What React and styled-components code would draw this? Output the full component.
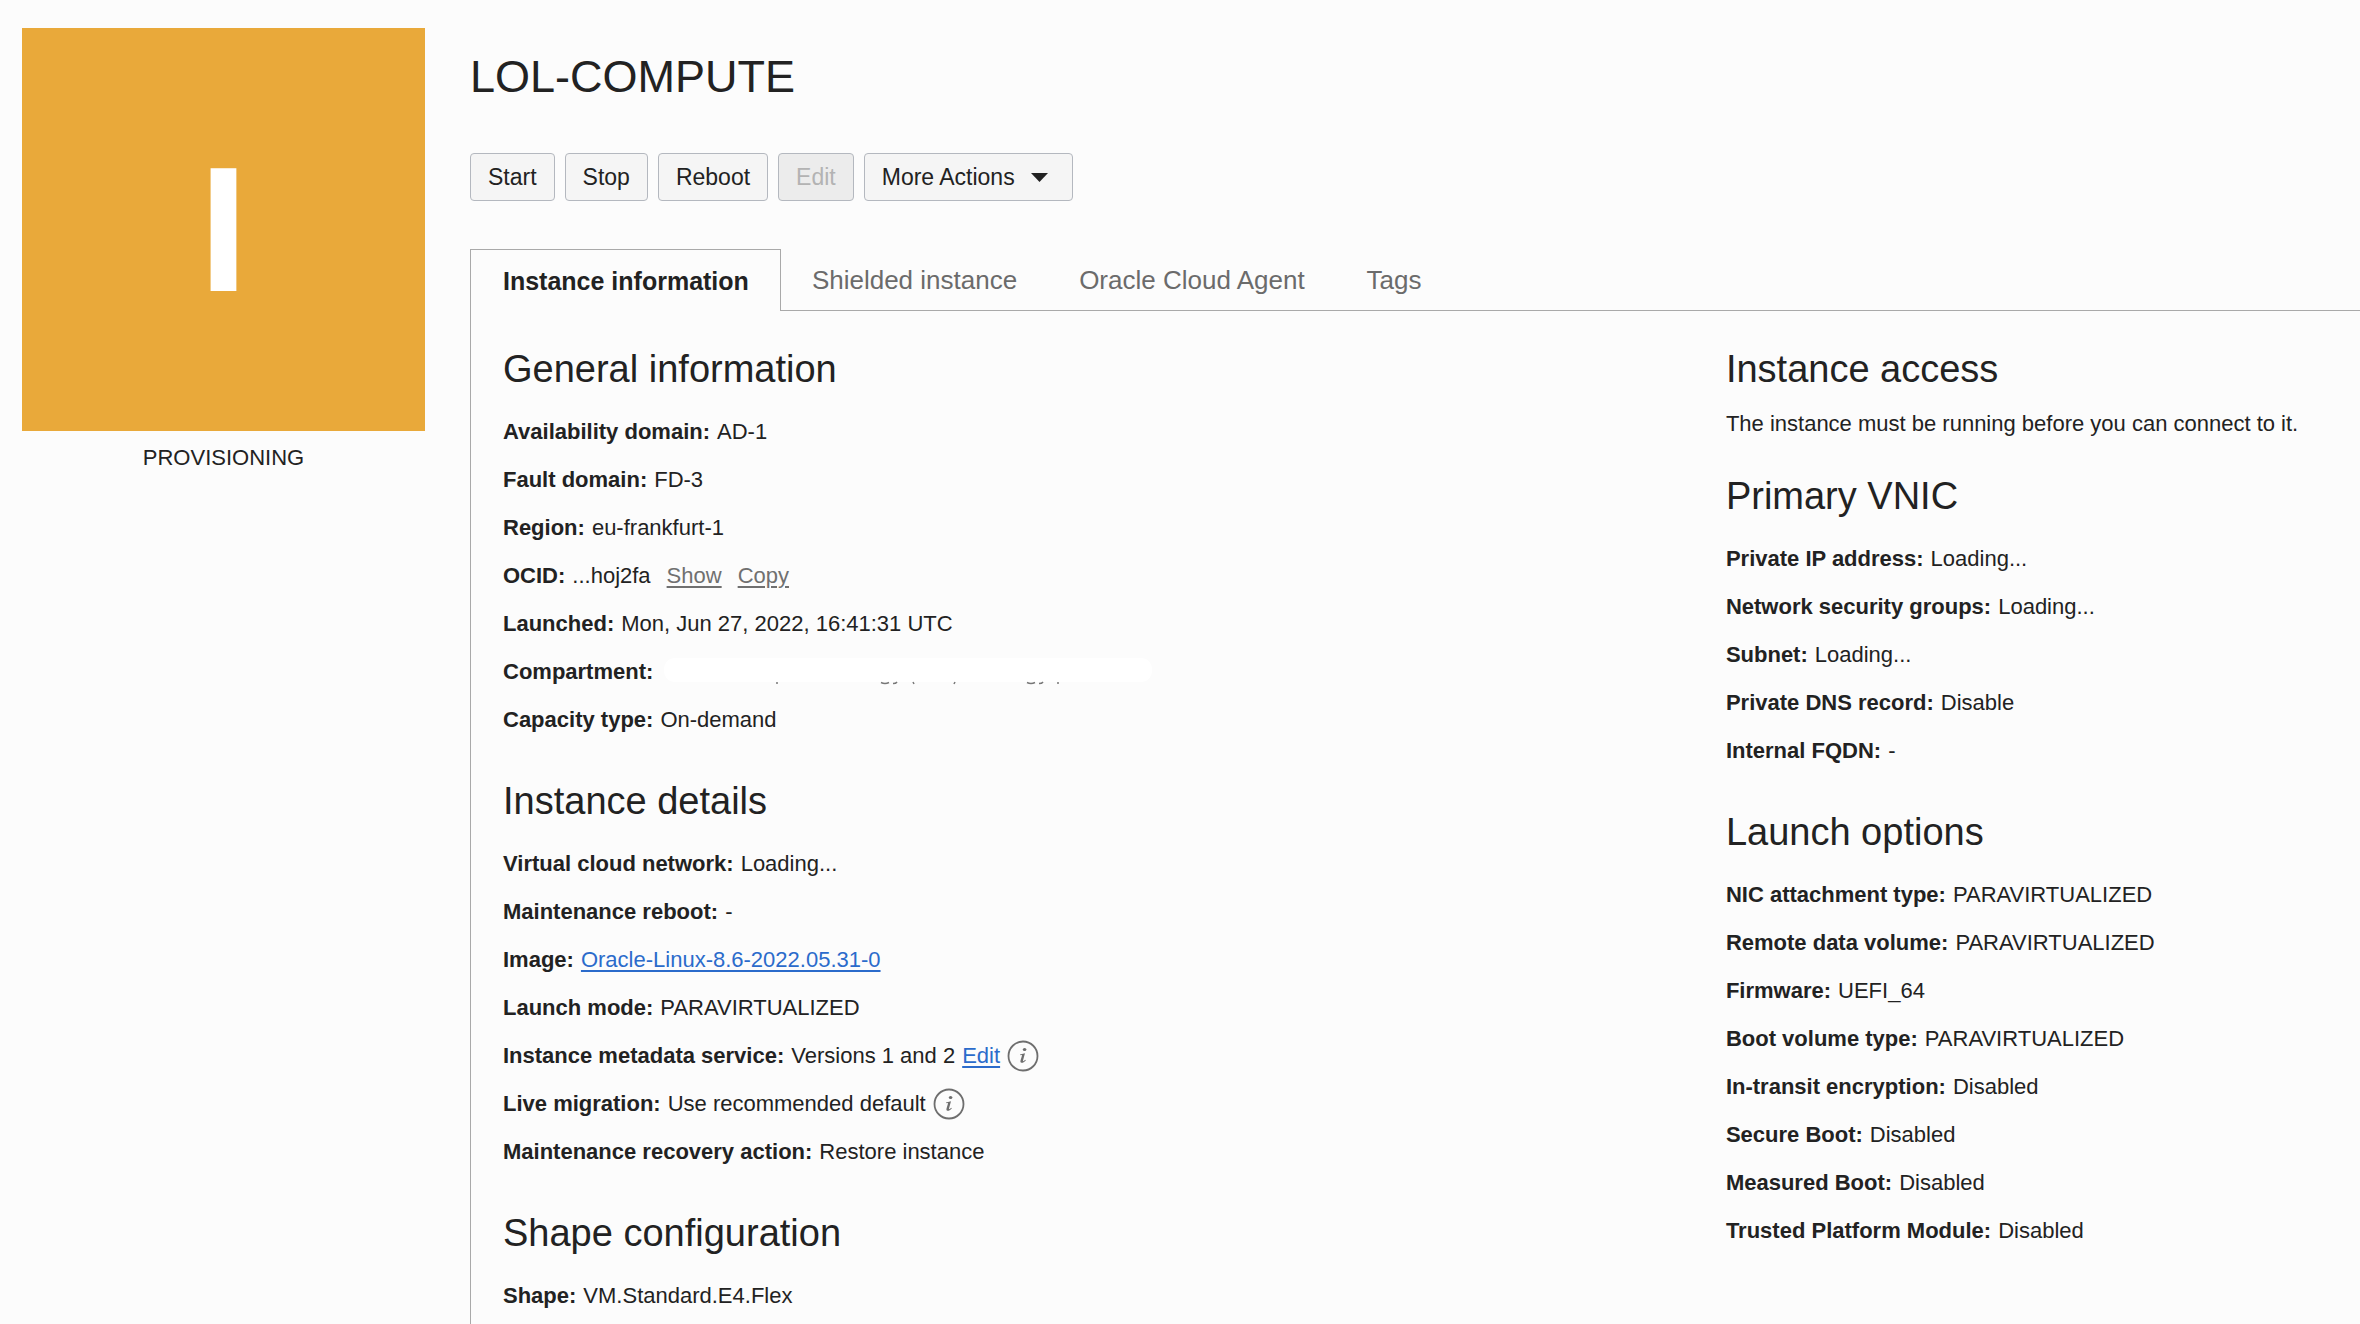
import React from "react";
import styled, { createGlobalStyle, css } from "styled-components";

const GlobalStyle = createGlobalStyle`
  *, *::before, *::after { box-sizing: border-box; }
  body {
    margin: 0;
    background: #fcfcfc;
    color: #222;
    font-family: "Liberation Sans", Arial, Helvetica, sans-serif;
    font-size: 22px;
  }
`;

const Page = styled.div`
  display: flex;
  align-items: stretch;
  min-height: 100vh;
  padding: 28px 0 0 22px;
  overflow-x: hidden;
`;

const StatusPanel = styled.aside`
  flex: 0 0 403px;
  margin-right: 45px;
`;

const StatusTile = styled.div`
  display: flex;
  align-items: center;
  justify-content: center;
  aspect-ratio: 1;
  background: #e9a93a;
  color: #fff;
  font-size: 178px;
  font-weight: 700;
`;

const StatusText = styled.p`
  margin: 9px 0 0;
  line-height: 36px;
  text-align: center;
`;

const Main = styled.main`
  flex: 1;
  min-width: 0;
  display: flex;
  flex-direction: column;
`;

const Title = styled.h1`
  margin: 21px 0 0;
  font-size: 45px;
  font-weight: 400;
  line-height: 56px;
`;

const Toolbar = styled.div`
  display: flex;
  gap: 10px;
  margin: 48px 0;
`;

const ActionButton = styled.button`
  display: flex;
  align-items: center;
  gap: 16px;
  height: 48px;
  padding: 0 17px;
  border: 1px solid #b4b8bf;
  border-radius: 4px;
  background: #f5f5f5;
  color: #222;
  font: inherit;
  font-size: 23px;
  ${(p) => p.$wide && css`padding-right: 24px;`}
  &:disabled {
    background: #ececec;
    color: #b3b3b3;
  }
`;

const TabBar = styled.div`
  display: flex;
  height: 62px;
  &::after {
    content: "";
    flex: 1;
    border-bottom: 1px solid #a9a9a9;
  }
`;

const Tab = styled.button`
  padding: 0 31px;
  border: 0 solid #a9a9a9;
  border-bottom-width: 1px;
  background: none;
  color: #6b6b6b;
  font: inherit;
  font-size: 26px;
  line-height: 60px;
  ${(p) => p.$active && css`
    padding: 0 31px 0 32px;
    border-width: 1px 1px 0;
    color: #222;
    font-size: 25px;
    font-weight: 700;
  `}
`;

const Panel = styled.div`
  flex: 1;
  display: grid;
  grid-template-columns: minmax(0, 27fr) minmax(0, 14fr);
  align-items: start;
  padding: 34px 0 0 32px;
  border-left: 1px solid #a9a9a9;
`;

const Column = styled.div`
  display: flex;
  flex-direction: column;
  gap: 33px;
`;

const SectionTitle = styled.h2`
  margin: 0 0 15px;
  font-size: 38px;
  font-weight: 400;
  line-height: 48px;
`;

const Note = styled.p`
  margin: 0;
  line-height: 31px;
`;

const Facts = styled.dl`
  margin: 0;
`;

const Fact = styled.div`
  display: flex;
  align-items: center;
  gap: 7px;
  height: 48px;
  white-space: nowrap;
`;

const Term = styled.dt`
  font-weight: 700;
`;

const Value = styled.dd`
  display: flex;
  align-items: center;
  gap: 7px;
  margin: 0;
`;

const Link = styled.a`
  color: ${(p) => (p.$muted ? "#707070" : "#2b6bcb")};
  text-decoration: underline;
  text-decoration-thickness: 2px;
  text-underline-offset: 3px;
  ${(p) => p.$muted && css`margin-left: 9px;`}
`;

const InfoButton = styled.button`
  display: flex;
  padding: 0;
  border: 0;
  background: none;
`;

const Info = () => (
  <InfoButton type="button" aria-label="More information">
    <svg width="32" height="32" viewBox="0 0 32 32" fill="none">
      <circle cx="16" cy="16" r="14.5" stroke="#6e6e6e" strokeWidth="1.8" />
      <ellipse cx="17.6" cy="9.6" rx="1.8" ry="1.5" fill="#6e6e6e" />
      <path d="M13 14.6L18 13.2L16 20.6C15.8 21.5 16.6 21.3 18.4 19.8L18.8 20.4C17 22.3 15.6 22.9 14.5 22.7C13.4 22.5 13.2 21.7 13.6 20.3L15 15.6C15.2 15 14.6 14.9 13.1 15.3Z" fill="#6e6e6e" />
    </svg>
  </InfoButton>
);

const Caret = () => (
  <svg width="17" height="9" viewBox="0 0 17 9"><path d="M0 0H17L8.5 9Z" fill="#222" /></svg>
);

// Masked compartment name: only the tips of its descenders show below the mask.
const Redaction = () => (
  <svg width="492" height="28" viewBox="0 0 492 28" aria-hidden="true">
    <rect x="4" width="488" height="24" rx="11" fill="#fff" />
    <path
      d="M117 24v2M221 24.5q4 2 8 0M233 25.5q3 0 4 -1.5M253 24l1 2M294 26l1 -2M367 24.5q4 2 8 0M379 25.5q3 0 4 -1.5M398 24v2"
      fill="none"
      stroke="#777"
      strokeWidth="1.5"
    />
  </svg>
);

const left = [
  ["General information", [
    ["Availability domain", "AD-1"],
    ["Fault domain", "FD-3"],
    ["Region", "eu-frankfurt-1"],
    ["OCID", <>...hoj2fa<Link href="#show" $muted>Show</Link><Link href="#copy" $muted>Copy</Link></>],
    ["Launched", "Mon, Jun 27, 2022, 16:41:31 UTC"],
    ["Compartment", <Redaction />],
    ["Capacity type", "On-demand"],
  ]],
  ["Instance details", [
    ["Virtual cloud network", "Loading..."],
    ["Maintenance reboot", "-"],
    ["Image", <Link href="#image">Oracle-Linux-8.6-2022.05.31-0</Link>],
    ["Launch mode", "PARAVIRTUALIZED"],
    ["Instance metadata service", <>Versions 1 and 2 <Link href="#edit">Edit</Link><Info /></>],
    ["Live migration", <>Use recommended default <Info /></>],
    ["Maintenance recovery action", "Restore instance"],
  ]],
  ["Shape configuration", [["Shape", "VM.Standard.E4.Flex"]]],
];

const right = [
  ["Primary VNIC", [
    ["Private IP address", "Loading..."],
    ["Network security groups", "Loading..."],
    ["Subnet", "Loading..."],
    ["Private DNS record", "Disable"],
    ["Internal FQDN", "-"],
  ]],
  ["Launch options", [
    ["NIC attachment type", "PARAVIRTUALIZED"],
    ["Remote data volume", "PARAVIRTUALIZED"],
    ["Firmware", "UEFI_64"],
    ["Boot volume type", "PARAVIRTUALIZED"],
    ["In-transit encryption", "Disabled"],
    ["Secure Boot", "Disabled"],
    ["Measured Boot", "Disabled"],
    ["Trusted Platform Module", "Disabled"],
  ]],
];

const Section = ({ title, facts }) => (
  <section>
    <SectionTitle>{title}</SectionTitle>
    <Facts>
      {facts.map(([term, value]) => (
        <Fact key={term}>
          <Term>{term}:</Term>
          <Value>{value}</Value>
        </Fact>
      ))}
    </Facts>
  </section>
);

export default function App() {
  return (
    <>
      <GlobalStyle />
      <Page>
        <StatusPanel>
          <StatusTile>I</StatusTile>
          <StatusText>PROVISIONING</StatusText>
        </StatusPanel>
        <Main>
          <Title>LOL-COMPUTE</Title>
          <Toolbar>
            <ActionButton type="button">Start</ActionButton>
            <ActionButton type="button">Stop</ActionButton>
            <ActionButton type="button">Reboot</ActionButton>
            <ActionButton type="button" disabled>Edit</ActionButton>
            <ActionButton type="button" $wide aria-haspopup="menu">More Actions<Caret /></ActionButton>
          </Toolbar>
          <TabBar role="tablist">
            <Tab type="button" role="tab" aria-selected="true" $active>Instance information</Tab>
            <Tab type="button" role="tab" aria-selected="false">Shielded instance</Tab>
            <Tab type="button" role="tab" aria-selected="false">Oracle Cloud Agent</Tab>
            <Tab type="button" role="tab" aria-selected="false">Tags</Tab>
          </TabBar>
          <Panel role="tabpanel">
            <Column>
              {left.map(([title, facts]) => <Section key={title} title={title} facts={facts} />)}
            </Column>
            <Column>
              <section>
                <SectionTitle>Instance access</SectionTitle>
                <Note>The instance must be running before you can connect to it.</Note>
              </section>
              {right.map(([title, facts]) => <Section key={title} title={title} facts={facts} />)}
            </Column>
          </Panel>
        </Main>
      </Page>
    </>
  );
}
